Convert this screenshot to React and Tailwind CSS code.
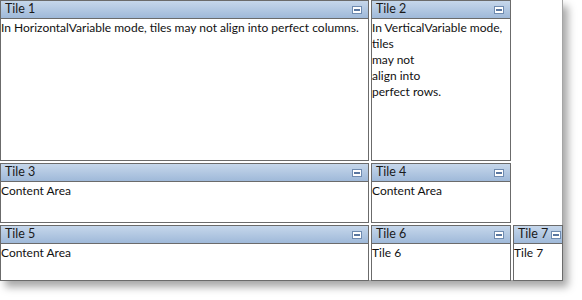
const font = { fontFamily: 'Lato, "Open Sans", sans-serif' };

function MinIcon() {
  return (
    <span className="flex h-[8px] w-[10px] shrink-0 items-center justify-center border border-[#6f8bb0] bg-white">
      <span className="h-[2px] w-[6px] bg-[#5a77a0]" />
    </span>
  );
}

function Tile({ title, width, height, children, tight }) {
  return (
    <div
      className="flex shrink-0 flex-col border border-[#6b6b6b] bg-white"
      style={{ width, height }}
    >
      <div
        className={`flex h-[18px] shrink-0 items-center border-b border-[#6b6b6b] bg-gradient-to-b from-[#c6d7eb] to-[#9fb9d9] ${
          tight ? "gap-[3px] pl-[4px]" : "justify-between pl-[4px] pr-[6px]"
        }`}
      >
        <span className="text-[12.5px] leading-none text-[#1a1a1a]">{title}</span>
        <MinIcon />
      </div>
      <div className="overflow-hidden pt-[1px] text-[12px] leading-[16px] text-[#111]">{children}</div>
    </div>
  );
}

export default function App() {
  return (
    <div className="h-[300px] w-[582px] bg-white" style={font}>
      <div className="flex h-[281px] w-[563px] flex-col gap-[2px] border-r border-b border-[#a5a5a5] bg-white shadow-[5px_6px_8px_rgba(0,0,0,0.35)]">
        <div className="flex gap-[2px]">
          <Tile title="Tile 1" width={369} height={161}>
            <span className="whitespace-nowrap">
              In HorizontalVariable mode, tiles may not align into perfect columns.
            </span>
          </Tile>
          <Tile title="Tile 2" width={140} height={161}>
            In VerticalVariable mode,
            <br />
            tiles
            <br />
            may not
            <br />
            align into
            <br />
            perfect rows.
          </Tile>
        </div>
        <div className="flex gap-[2px]">
          <Tile title="Tile 3" width={369} height={60}>
            Content Area
          </Tile>
          <Tile title="Tile 4" width={140} height={60}>
            Content Area
          </Tile>
        </div>
        <div className="flex flex-1 gap-[2px]">
          <Tile title="Tile 5" width={369} height={56}>
            Content Area
          </Tile>
          <Tile title="Tile 6" width={140} height={56}>
            Tile 6
          </Tile>
          <Tile title="Tile 7" width={50} height={56} tight>
            Tile 7
          </Tile>
        </div>
      </div>
    </div>
  );
}
